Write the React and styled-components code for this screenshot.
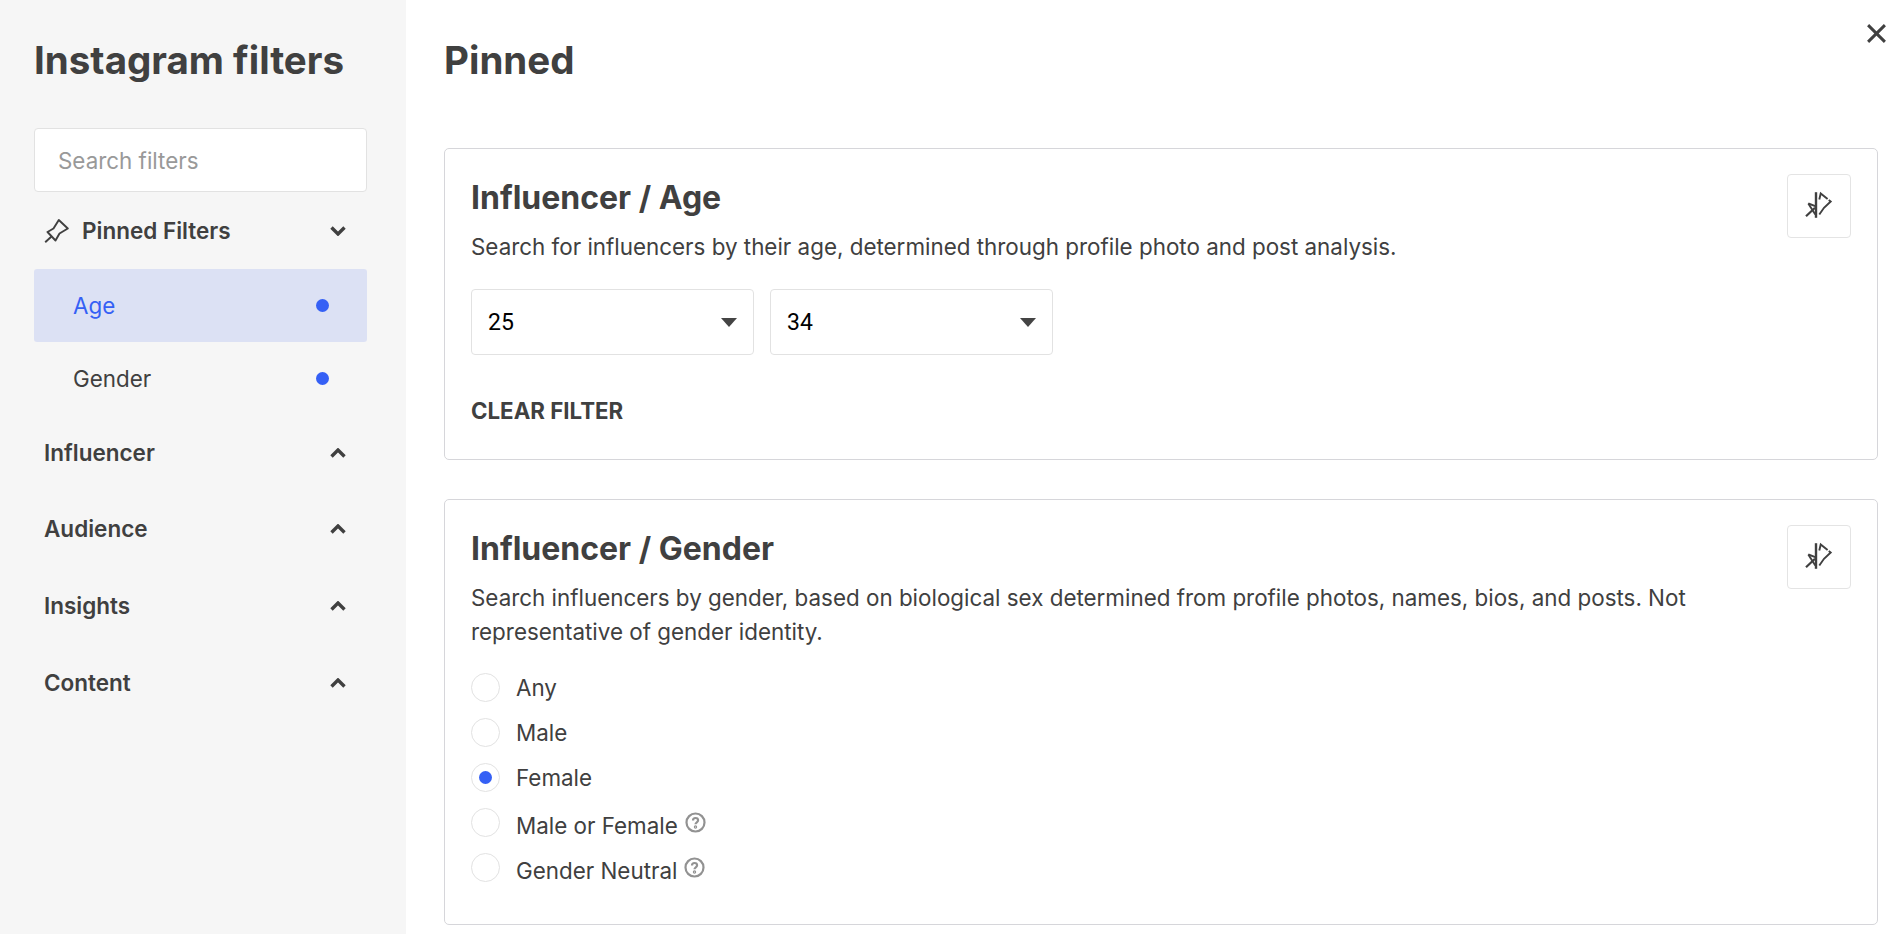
import React from 'react';
import styled, { createGlobalStyle } from 'styled-components';

const Global = createGlobalStyle`
  html, body { margin: 0; padding: 0; height: 100%; background: #fff; overflow: hidden; }
  body { font-family: Inter, "Liberation Sans", sans-serif; color: #404040; }
  * { box-sizing: border-box; }
`;

const Page = styled.div`
  display: flex;
  height: 934px;
  width: 1902px;
  overflow: hidden;
  position: relative;
`;

const Sidebar = styled.aside`
  width: 406px;
  flex: none;
  background: #f6f6f6;
  padding: 38px 39px 0 34px;
`;

const SideTitle = styled.h1`
  margin: 0 0 46px;
  font-size: 38.5px;
  line-height: 44px;
  font-weight: 700;
  color: #404040;
  white-space: nowrap;
`;

const SearchBox = styled.div`
  height: 64px;
  background: #fff;
  border: 1px solid #e2e2e2;
  border-radius: 4px;
  padding: 0 23px;
  display: flex;
  align-items: center;
  font-size: 22.4px;
  color: #999;
`;

const Section = styled.div`
  height: ${p => p.$h}px;
  display: flex;
  align-items: center;
  padding: 0 10px;
  font-size: 22.5px;
  font-weight: 600;
  color: #404040;
  gap: 14px;
`;

const SectionLabel = styled.span`
  flex: 1;
`;

const Chevron = styled.svg`
  width: 16px;
  height: 10px;
  margin-right: 11px;
  fill: none;
  stroke: #404040;
  stroke-width: 3.4;
  transform: ${p => (p.$up ? 'rotate(180deg)' : 'none')};
`;

const SubItem = styled.div`
  height: 73px;
  display: flex;
  align-items: center;
  justify-content: space-between;
  padding: 0 38px 0 39px;
  border-radius: 3px;
  font-size: 22.4px;
  background: ${p => (p.$active ? '#dce1f4' : 'transparent')};
  color: ${p => (p.$active ? '#3560f5' : '#404040')};
`;

const Dot = styled.span`
  width: 13px;
  height: 13px;
  border-radius: 50%;
  background: #3560f5;
`;

const Main = styled.main`
  flex: 1;
  padding: 38px 24px 0 38px;
`;

const MainTitle = styled.h2`
  margin: 0 0 66px;
  font-size: 38.5px;
  line-height: 44px;
  font-weight: 700;
  color: #404040;
`;

const Card = styled.section`
  position: relative;
  border: 1px solid #d6d6da;
  border-radius: 5px;
  padding: 31px 26px 0;
  height: ${p => p.$h}px;
  margin-bottom: 39px;
`;

const CardTitle = styled.h3`
  margin: 0 0 14px;
  font-size: 32px;
  line-height: 36px;
  font-weight: 700;
  color: #404040;
`;

const CardText = styled.p`
  margin: 0;
  max-width: 1300px;
  font-size: 22.4px;
  line-height: 34px;
  color: #404040;
`;

const PinButton = styled.button`
  position: absolute;
  top: 25px;
  right: 26px;
  width: 64px;
  height: 64px;
  background: #fff;
  border: 1px solid #e4e4e4;
  border-radius: 4px;
  display: flex;
  align-items: center;
  justify-content: center;
  padding: 0;
`;

const Selects = styled.div`
  display: flex;
  gap: 16px;
  margin-top: 25px;
`;

const Select = styled.div`
  width: 283px;
  height: 66px;
  border: 1px solid #e2e2e2;
  border-radius: 4px;
  display: flex;
  align-items: center;
  justify-content: space-between;
  padding: 0 16px 0 16px;
  font-family: Roboto, "Liberation Sans", sans-serif;
  font-size: 23px;
  color: #000;
`;

const Caret = styled.span`
  width: 0;
  height: 0;
  border-left: 8.5px solid transparent;
  border-right: 8.5px solid transparent;
  border-top: 9px solid #444;
`;

const ClearButton = styled.div`
  margin-top: 43px;
  line-height: 26px;
  font-weight: 700;
  font-size: 22.3px;
  color: #404040;
`;

const Radios = styled.div`
  display: flex;
  flex-direction: column;
  margin-top: 16px;
`;

const RadioRow = styled.div`
  height: 45px;
  display: flex;
  align-items: center;
  gap: 16px;
  font-size: 22.4px;
  color: #404040;
`;

const RadioCircle = styled.span`
  width: 29px;
  height: 29px;
  border: 1px solid #e2e2e2;
  border-radius: 50%;
  display: flex;
  align-items: center;
  justify-content: center;
  flex: none;
  background: #fff;
  &::after {
    content: '';
    display: ${p => (p.$on ? 'block' : 'none')};
    width: 13px;
    height: 13px;
    border-radius: 50%;
    background: #3560f5;
  }
`;

const RadioLabel = styled.span`
  display: inline-flex;
  align-items: center;
  gap: 7px;
  transform: translateY(${p => (p.$help ? '3px' : '0')});
`;

const Help = styled.svg`
  width: 21px;
  height: 21px;
  fill: none;
  stroke: #929292;
  stroke-width: 2.2;
  transform: translateY(-3px);
`;

const CloseButton = styled.svg`
  position: absolute;
  top: 23px;
  right: 15px;
  width: 21px;
  height: 21px;
  stroke: #404040;
  stroke-width: 2.8;
  fill: none;
`;

const PinIcon = styled.svg`
  width: 25px;
  height: 24px;
  fill: none;
  stroke: #404040;
  stroke-width: 1.9;
  stroke-linejoin: round;
  flex: none;
  margin-right: -1px;
`;

const UnpinSvg = styled.svg`
  width: 28px;
  height: 30px;
  fill: none;
  stroke: #404040;
  stroke-width: 1.9;
`;

const ChevronIcon = ({ up }) => (
  <Chevron $up={up} viewBox="0 0 16 10"><path d="M1.5 1.5L8 8l6.5-6.5" /></Chevron>
);

const HelpIcon = () => (
  <Help viewBox="0 0 21 21">
    <circle cx="10.5" cy="10.5" r="9" />
    <path d="M8 8.4c0-1.5 1.1-2.4 2.5-2.4s2.6.9 2.6 2.3c0 2-2.6 2-2.6 4" />
    <circle cx="10.5" cy="15" r=".6" />
  </Help>
);

const UnpinIcon = () => (
  <UnpinSvg viewBox="0 1.5 28 30">
    <path d="M11 2.7v25.6" strokeWidth="2.4" />
    <path d="M3.3 14l7 2.7" />
    <path d="M3.3 14l7 11" />
    <path d="M1 26.7l9-8.4" strokeWidth="2.2" />
    <path d="M14.3 10L15.7 4l10 8-6.7 6.3-4.7 6.7" strokeDasharray="15 1.5 30" />
  </UnpinSvg>
);

const radios = [
  { label: 'Any' },
  { label: 'Male' },
  { label: 'Female', on: true },
  { label: 'Male or Female', help: true },
  { label: 'Gender Neutral', help: true },
];

export default function App() {
  return (
    <Page>
      <Global />
      <Sidebar>
        <SideTitle>Instagram filters</SideTitle>
        <SearchBox>Search filters</SearchBox>
        <Section $h={77}>
          <PinIcon viewBox="0 0 24 24">
            <path d="M14.3 1l9 8.5L15 14.5l-4 7L3 13l6-3.5z" />
            <path d="M.7 23.3L7 17.5" />
          </PinIcon>
          <SectionLabel>Pinned Filters</SectionLabel>
          <ChevronIcon />
        </Section>
        <SubItem $active>Age<Dot /></SubItem>
        <SubItem>Gender<Dot /></SubItem>
        <Section $h={75}><SectionLabel>Influencer</SectionLabel><ChevronIcon up /></Section>
        <Section $h={77}><SectionLabel>Audience</SectionLabel><ChevronIcon up /></Section>
        <Section $h={77}><SectionLabel>Insights</SectionLabel><ChevronIcon up /></Section>
        <Section $h={77}><SectionLabel>Content</SectionLabel><ChevronIcon up /></Section>
      </Sidebar>
      <Main>
        <MainTitle>Pinned</MainTitle>
        <Card $h={312}>
          <CardTitle>Influencer / Age</CardTitle>
          <CardText>Search for influencers by their age, determined through profile photo and post analysis.</CardText>
          <PinButton aria-label="Unpin"><UnpinIcon /></PinButton>
          <Selects>
            <Select>25<Caret /></Select>
            <Select>34<Caret /></Select>
          </Selects>
          <ClearButton>CLEAR FILTER</ClearButton>
        </Card>
        <Card $h={426}>
          <CardTitle>Influencer / Gender</CardTitle>
          <CardText>Search influencers by gender, based on biological sex determined from profile photos, names, bios, and posts. Not representative of gender identity.</CardText>
          <PinButton aria-label="Unpin"><UnpinIcon /></PinButton>
          <Radios>
            {radios.map(r => (
              <RadioRow key={r.label}>
                <RadioCircle $on={r.on} />
                <RadioLabel $help={r.help}>{r.label}{r.help && <HelpIcon />}</RadioLabel>
              </RadioRow>
            ))}
          </Radios>
        </Card>
      </Main>
      <CloseButton viewBox="0 0 20 20"><path d="M2 2l16 16M18 2L2 18" /></CloseButton>
    </Page>
  );
}
